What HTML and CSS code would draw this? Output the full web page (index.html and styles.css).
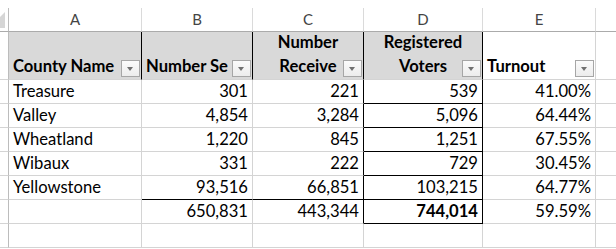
FILE: index.html
```html
<!DOCTYPE html>
<html>
<head>
<meta charset="utf-8">
<link rel="stylesheet" href="styles.css">
</head>
<body>
<div class="sheet">
  <div class="row colhdr">
    <div class="c rh corner"><svg class="tri" width="8" height="23" viewBox="0 0 8 23"><polygon points="0,9 5,4 5,20 0,20" fill="#d6d6d6"/></svg></div>
    <div class="c ca">A</div>
    <div class="c cb">B</div>
    <div class="c cc">C</div>
    <div class="c cd">D</div>
    <div class="c ce">E</div>
    <div class="c cf"></div>
  </div>
  <div class="row thead">
    <div class="c rh"></div>
    <div class="c ca hd fill bk-r left"><span class="t">County Name</span><i class="btn"></i></div>
    <div class="c cb hd fill bk-r left"><span class="t">Number Se</span><i class="btn"></i></div>
    <div class="c cc hd fill bk-r center"><span class="t">Number<br>Receive</span><i class="btn"></i></div>
    <div class="c cd hd fill bk-r center"><span class="t">Registered<br>Voters</span><i class="btn"></i></div>
    <div class="c ce hd left"><span class="t">Turnout</span><i class="btn"></i></div>
    <div class="c cf"></div>
  </div>
  <div class="row">
    <div class="c rh"></div>
    <div class="c ca txt">Treasure</div>
    <div class="c cb num">301</div>
    <div class="c cc num bk-r">221</div>
    <div class="c cd num bk-r bk-b">539</div>
    <div class="c ce num">41.00%</div>
    <div class="c cf"></div>
  </div>
  <div class="row">
    <div class="c rh"></div>
    <div class="c ca txt">Valley</div>
    <div class="c cb num">4,854</div>
    <div class="c cc num bk-r">3,284</div>
    <div class="c cd num bk-r bk-b">5,096</div>
    <div class="c ce num">64.44%</div>
    <div class="c cf"></div>
  </div>
  <div class="row">
    <div class="c rh"></div>
    <div class="c ca txt">Wheatland</div>
    <div class="c cb num">1,220</div>
    <div class="c cc num bk-r">845</div>
    <div class="c cd num bk-r bk-b">1,251</div>
    <div class="c ce num">67.55%</div>
    <div class="c cf"></div>
  </div>
  <div class="row">
    <div class="c rh"></div>
    <div class="c ca txt">Wibaux</div>
    <div class="c cb num">331</div>
    <div class="c cc num bk-r">222</div>
    <div class="c cd num bk-r bk-b">729</div>
    <div class="c ce num">30.45%</div>
    <div class="c cf"></div>
  </div>
  <div class="row">
    <div class="c rh"></div>
    <div class="c ca txt">Yellowstone</div>
    <div class="c cb num bk-b">93,516</div>
    <div class="c cc num bk-r bk-b">66,851</div>
    <div class="c cd num bk-r bk-b">103,215</div>
    <div class="c ce num">64.77%</div>
    <div class="c cf"></div>
  </div>
  <div class="row">
    <div class="c rh"></div>
    <div class="c ca txt"></div>
    <div class="c cb num">650,831</div>
    <div class="c cc num bk-r">443,344</div>
    <div class="c cd num bk-r bk-b bold">744,014</div>
    <div class="c ce num">59.59%</div>
    <div class="c cf"></div>
  </div>
  <div class="row">
    <div class="c rh"></div>
    <div class="c ca"></div>
    <div class="c cb"></div>
    <div class="c cc"></div>
    <div class="c cd"></div>
    <div class="c ce"></div>
    <div class="c cf"></div>
  </div>
</div>
</body>
</html>
```

FILE: styles.css
```css
* { box-sizing: border-box; margin: 0; padding: 0; }
html, body { background: #fff; }
body { margin: 0; overflow: hidden; font-family: "Lato", "Open Sans", sans-serif; color: #000; }

.sheet { padding-top: 8px; width: 616px; height: 249px; overflow: hidden; }

.row { display: flex; height: 24px; }
.row.thead { height: 48px; }

.c {
  position: relative;
  flex: none;
  height: 100%;
  border-right: 1px solid #d4d4d4;
  border-bottom: 1px solid #d4d4d4;
  font-size: 16.6px;
  line-height: 23px;
  white-space: nowrap;
  overflow: hidden;
}
.rh { width: 9px; border-right-color: #bcbcbc; }
.ca { width: 133px; }
.cb { width: 111px; }
.cc { width: 111px; }
.cd { width: 119px; }
.ce { width: 113px; }
.cf { flex: 1; border-right: none; }

.colhdr .c {
  border-bottom-color: #ababab;
  border-right-color: #dadada;
  text-align: center;
  font-size: 15px;
  color: #444;
  line-height: 23px;
}
.colhdr .rh { border-right-color: #bcbcbc; }
.tri { display: block; }

.fill { background: #d9d9d9; }
.bk-r { border-right-color: #000 !important; }
.bk-b { border-bottom-color: #000 !important; }

.hd {
  display: flex;
  align-items: flex-end;
  font-weight: 700;
  line-height: 24px;
  padding-bottom: 1px;
}
.hd.left { padding-left: 4px; }
.hd.center { justify-content: center; text-align: center; }
.hd .t { display: block; }

.btn {
  position: absolute;
  right: 1px;
  bottom: 2px;
  width: 19px;
  height: 17px;
  border: 1px solid #a6a6a6;
  background: linear-gradient(#fbfbfb, #ececec);
}
.btn::after {
  content: "";
  position: absolute;
  left: 5px;
  top: 6px;
  border-left: 3.5px solid transparent;
  border-right: 3.5px solid transparent;
  border-top: 4px solid #707070;
}

.txt { padding-left: 4px; }
.num { text-align: right; padding-right: 4px; }
.bold { font-weight: 700; }
```
